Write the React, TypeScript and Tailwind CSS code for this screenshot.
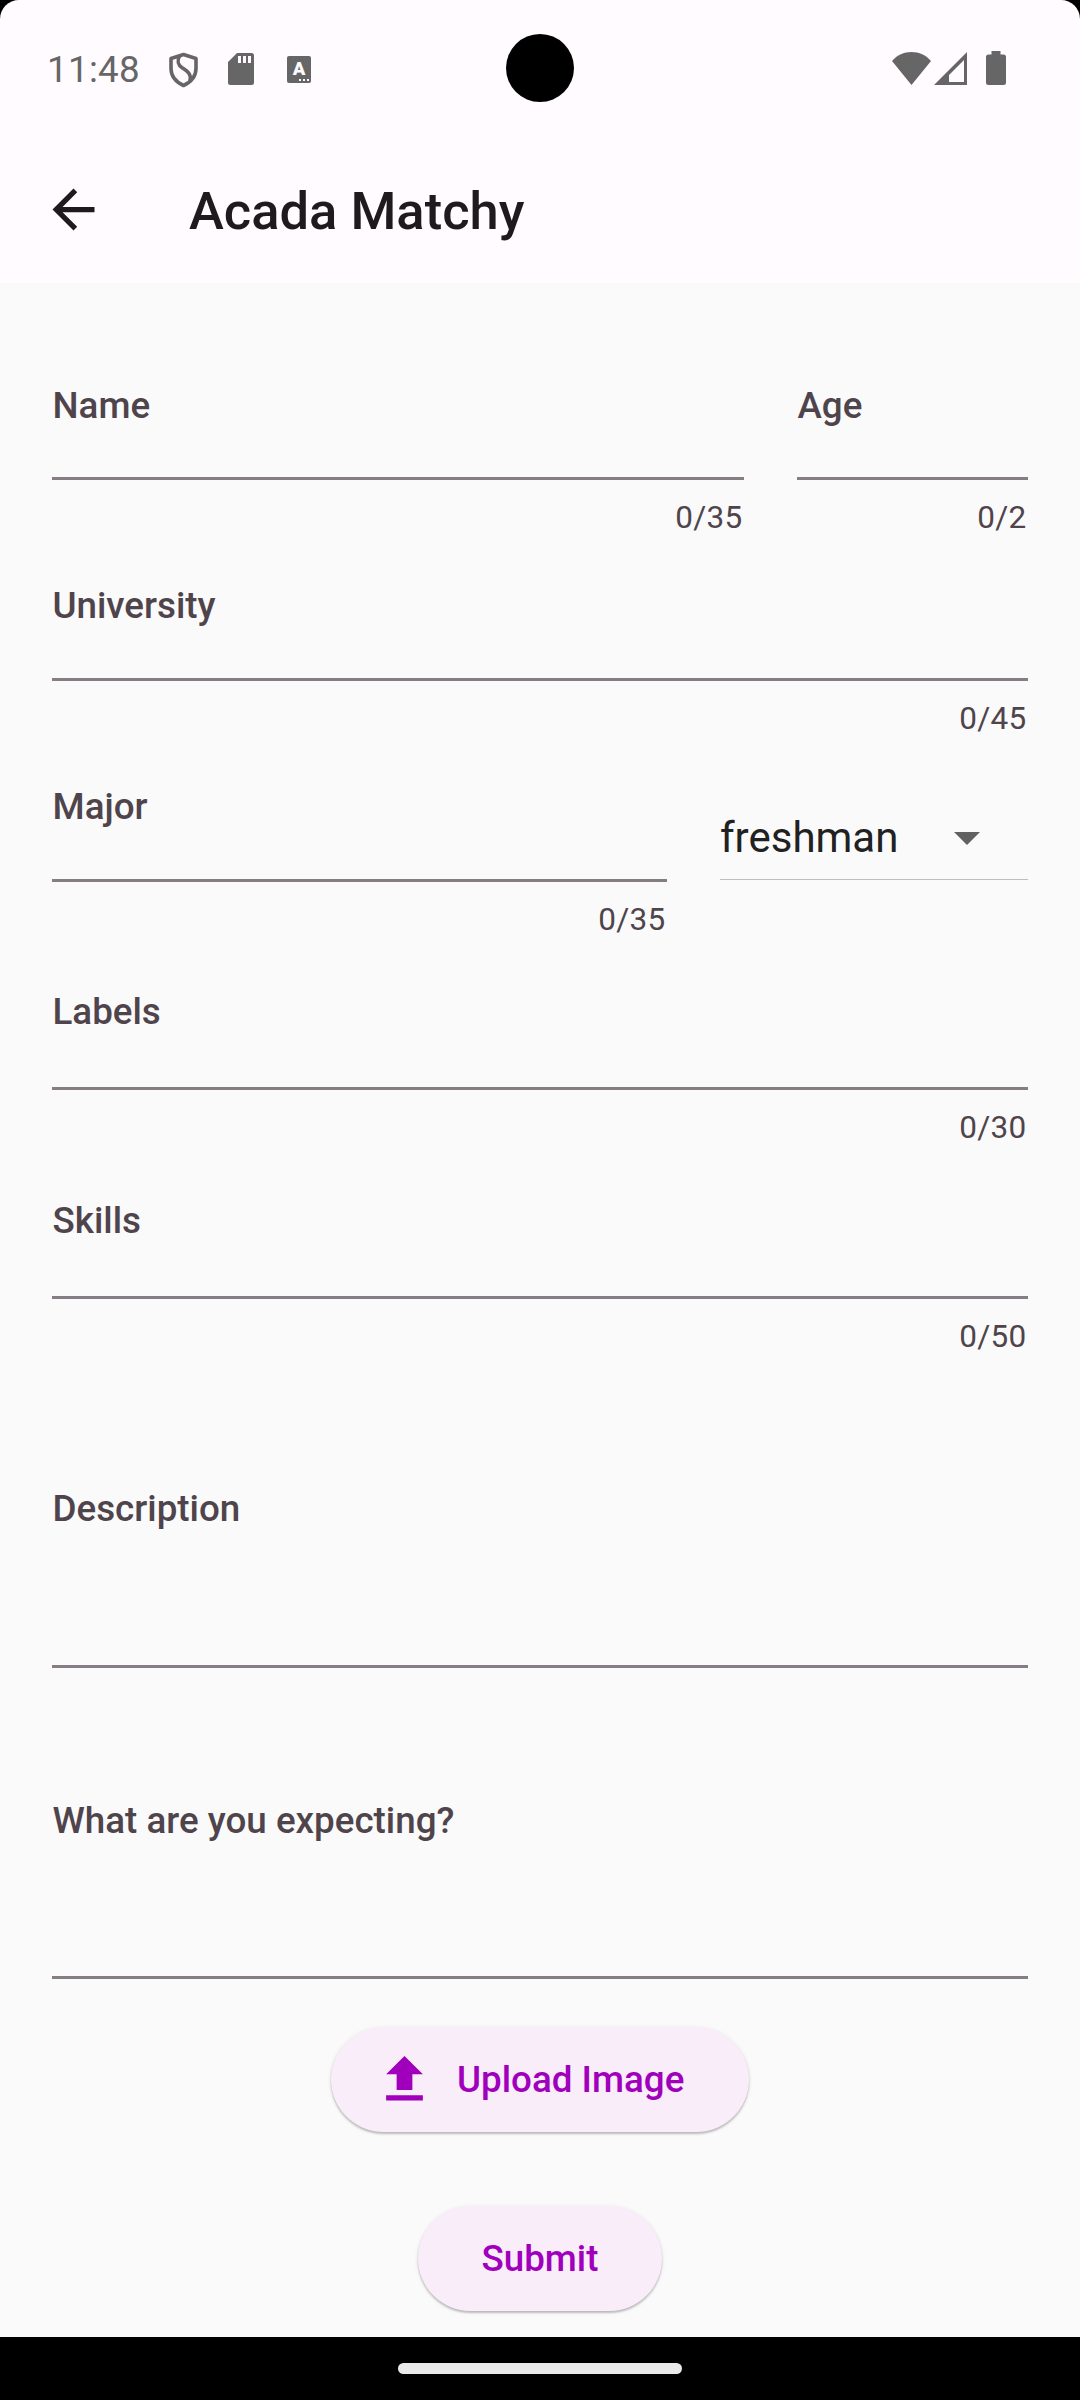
import { useState } from 'react'
import type { ReactNode } from 'react'

interface FieldProps {
  label: string
  max?: number
  className?: string
  inputClassName: string
}

function Field({ label, max, className = '', inputClassName }: FieldProps) {
  const [value, setValue] = useState('')

  return (
    <div className={`flex flex-col text-[#4f444b] ${className}`}>
      <label className="flex flex-col pl-[0.5px] text-[36.75px] leading-[43px] font-medium">
        {label}
        <input
          value={value}
          maxLength={max}
          onChange={(e) => setValue(e.target.value)}
          className={`w-full bg-transparent font-normal outline-none ${inputClassName}`}
        />
      </label>
      <div className="h-[3px] bg-[#867d84]" />
      {max && (
        <span className="mt-5 mr-[1.5px] self-end text-[31.5px] leading-9 tracking-[0.25px]">
          {value.length}/{max}
        </span>
      )}
    </div>
  )
}

function PillButton({ children, className }: { children: ReactNode; className: string }) {
  return (
    <button
      type="button"
      className={`flex h-[105px] items-center rounded-full bg-[#f9edf9] text-[36.75px] leading-[43px] font-medium text-[#a000bc] shadow-[0_2px_2px_rgba(0,0,0,0.2),0_1px_4px_rgba(0,0,0,0.1)] ${className}`}
    >
      {children}
    </button>
  )
}

function StatusBar() {
  return (
    <div className="relative flex h-[136px] items-center justify-between text-[#666666]">
      <div className="flex items-center pl-[47px]">
        <span className="w-[121px] pt-[3px] text-[36.75px] leading-[43px] tracking-[0.3px]">11:48</span>
        {/* Shield */}
        <svg className="mt-[3px] h-9 w-[31px]" viewBox="0 0 31 36" fill="none" stroke="currentColor" strokeWidth="3.6">
          <path d="M15.5 2.500 28 6.500v10c0 8-5 13.500-12.500 17C8 30 3 24.500 3 16.500v-10z" strokeLinejoin="round" />
          <path d="M11.500 4c-3 6-1.500 9 3 12s9.500 6 7.500 13" />
        </svg>
        {/* SD card */}
        <svg className="mt-[2px] ml-[29px] h-8 w-[26px]" viewBox="0 0 26 32" fill="currentColor">
          <path
            fillRule="evenodd"
            d="M9 0h14.500A2.500 2.500 0 0 1 26 2.500v27a2.500 2.500 0 0 1-2.500 2.500h-21A2.500 2.500 0 0 1 0 29.500V9zM10 3v7h3V3zm5 0v7h3V3zm5 0v7h3V3z"
          />
        </svg>
        {/* Keyboard */}
        <span className="relative mt-[3px] ml-[33px] flex h-[27px] w-6 justify-center rounded-[2px] bg-[#666666]">
          <span className="pt-[2px] text-[18.5px] leading-[22px] font-black text-[#fffbff]">A</span>
          <span className="absolute right-[2px] bottom-[2px] flex gap-[2px]">
            <span className="size-[2px] bg-[#fffbff]" />
            <span className="size-[2px] bg-[#fffbff]" />
            <span className="size-[2px] bg-[#fffbff]" />
          </span>
        </span>
      </div>
      <div className="absolute top-[34px] left-[506px] size-[68px] rounded-full bg-black" />
      <div className="flex items-center pr-[74px]">
        <svg className="h-[33px] w-[39px]" viewBox="0 0 39 33" fill="currentColor">
          <path d="M19.500 33 0 9C5 3 12 0 19.500 0S34 3 39 9z" />
        </svg>
        <svg className="ml-[3px] h-[33px] w-[33px]" viewBox="0 0 33 33" fill="currentColor">
          <path fillRule="evenodd" d="M33 0v33H0zM30 8 15 23v7h15z" />
        </svg>
        <svg className="ml-[19px] h-[34px] w-5" viewBox="0 0 20 34" fill="currentColor">
          <path d="M5.500 0h9v3.500h3A2.500 2.500 0 0 1 20 6v25.500a2.500 2.500 0 0 1-2.500 2.500h-15A2.500 2.500 0 0 1 0 31.500V6a2.500 2.500 0 0 1 2.500-2.500h3z" />
        </svg>
      </div>
    </div>
  )
}

export default function App() {
  return (
    <div className="flex h-[2400px] w-[1080px] flex-col overflow-hidden bg-black font-['Roboto',sans-serif]">
      <header className="h-[283px] rounded-t-[19px] bg-[#fffbff]">
        <StatusBar />
        <div className="flex h-[147px] items-center pl-[42px]">
          <svg className="size-[63px]" viewBox="0 0 24 24" fill="#1e1a1d">
            <path d="M20 11H7.830l5.590-5.590L12 4l-8 8 8 8 1.410-1.410L7.830 13H20v-2z" />
          </svg>
          <h1 className="ml-[84px] pt-[2px] text-[52.5px] leading-[62px] font-medium text-[#1e1a1d]">Acada Matchy</h1>
        </div>
      </header>

      <form className="flex h-[2054px] flex-col bg-[#fafafa] px-[52px] pt-[101px]">
        <div className="flex gap-[53px]">
          <Field label="Name" max={35} className="w-[692px]" inputClassName="h-[50px]" />
          <Field label="Age" max={2} className="w-[231px]" inputClassName="h-[50px]" />
        </div>
        <Field label="University" max={45} className="mt-12" inputClassName="h-[51px]" />
        <div className="mt-12 flex justify-between">
          <Field label="Major" max={35} className="w-[615px]" inputClassName="h-[51px]" />
          {/* Class year dropdown */}
          <div className="flex h-[95px] w-[308px] items-end border-b border-[#bdbdbd] pb-[17px] text-[42px] leading-[49px] text-[#212121]">
            <span className="grow">freshman</span>
            <svg className="mr-12 mb-[17px] h-[13px] w-[26px]" viewBox="0 0 26 13" fill="#616161">
              <path d="M0 0h26L13 13z" />
            </svg>
          </div>
        </div>
        <Field label="Labels" max={30} className="mt-[52px]" inputClassName="h-[54px]" />
        <Field label="Skills" max={50} className="mt-[53px]" inputClassName="h-[54px]" />
        <Field label="Description" className="mt-[132px]" inputClassName="h-[135px]" />
        <Field label="What are you expecting?" className="mt-[131px]" inputClassName="h-[134px]" />

        <div className="mt-12 flex flex-col items-center gap-[74px]">
          <PillButton className="w-[418px] pl-[42px]">
            <svg className="mr-[21px] size-[63px]" viewBox="0 0 24 24" fill="currentColor">
              <path d="M5 20h14v-2H5v2zm0-10h4v6h6v-6h4l-7-7-7 7z" />
            </svg>
            Upload Image
          </PillButton>
          <PillButton className="w-[244px] justify-center">Submit</PillButton>
        </div>
      </form>

      {/* Gesture navigation bar */}
      <div className="flex grow justify-center pt-[26px]">
        <div className="h-[11px] w-[284px] rounded-full bg-[#eaeaea]" />
      </div>
    </div>
  )
}
